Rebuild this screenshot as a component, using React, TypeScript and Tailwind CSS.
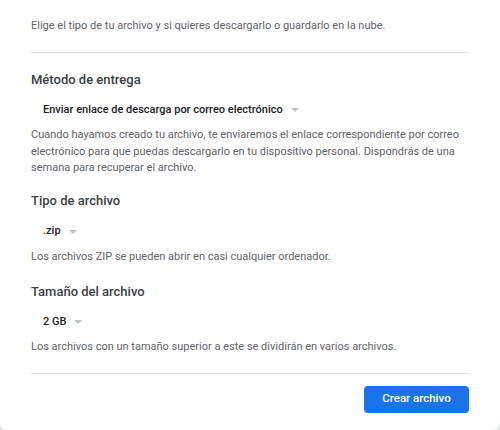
const Caret = () => (
  <svg width="8" height="4" viewBox="0 0 8 4" className="ml-[8px]">
    <path d="M0 0h8L4 4z" fill="#bdc1c6" />
  </svg>
)

type SectionProps = {
  title: string
  value: string
  top: string
  selectGap: string
  children: React.ReactNode
}

const Section = ({ title, value, top, selectGap, children }: SectionProps) => (
  <div className={top}>
    <h2 className="h-[20px] text-[13px] font-medium text-[#3c4043] leading-[20px]">{title}</h2>
    <div className={"flex items-center pl-[12px] h-[20px] text-[11px] font-medium text-[#202124] " + selectGap}>
      <span>{value}</span>
      <Caret />
    </div>
    <p className="mt-[7px] text-[11px] leading-[16.5px] text-[#5f6368]">{children}</p>
  </div>
)

export default function App() {
  return (
    <div className="w-[500px] h-[430px] bg-[#e8eaed]" style={{ fontFamily: "Roboto, 'Liberation Sans', sans-serif" }}>
      <div className="h-full bg-white rounded-b-[8px] px-[31px] pt-[18px]">
        <p className="text-[11px] leading-[16px] text-[#5f6368]">
          Elige el tipo de tu archivo y si quieres descargarlo o guardarlo en la nube.
        </p>
        <div className="mt-[18px] h-px bg-[#e0e0e0]" />
        <Section title="Método de entrega" value="Enviar enlace de descarga por correo electrónico" top="mt-[17px]" selectGap="mt-[10px]">
          Cuando hayamos creado tu archivo, te enviaremos el enlace correspondiente por correo
          electrónico para que puedas descargarlo en tu dispositivo personal. Dispondrás de una
          semana para recuperar el archivo.
        </Section>
        <Section title="Tipo de archivo" value=".zip" top="mt-[14px]" selectGap="mt-[11px]">
          Los archivos ZIP se pueden abrir en casi cualquier ordenador.
        </Section>
        <Section title="Tamaño del archivo" value="2 GB" top="mt-[17px]" selectGap="mt-[10px]">
          Los archivos con un tamaño superior a este se dividirán en varios archivos.
        </Section>
        <div className="mt-[17px] h-px bg-[#e0e0e0]" />
        <div className="flex justify-end pt-[12px]">
          <button className="w-[105px] h-[27px] rounded-[4px] bg-[#1a73e8] text-white text-[11.5px] font-medium">
            Crear archivo
          </button>
        </div>
      </div>
    </div>
  )
}
